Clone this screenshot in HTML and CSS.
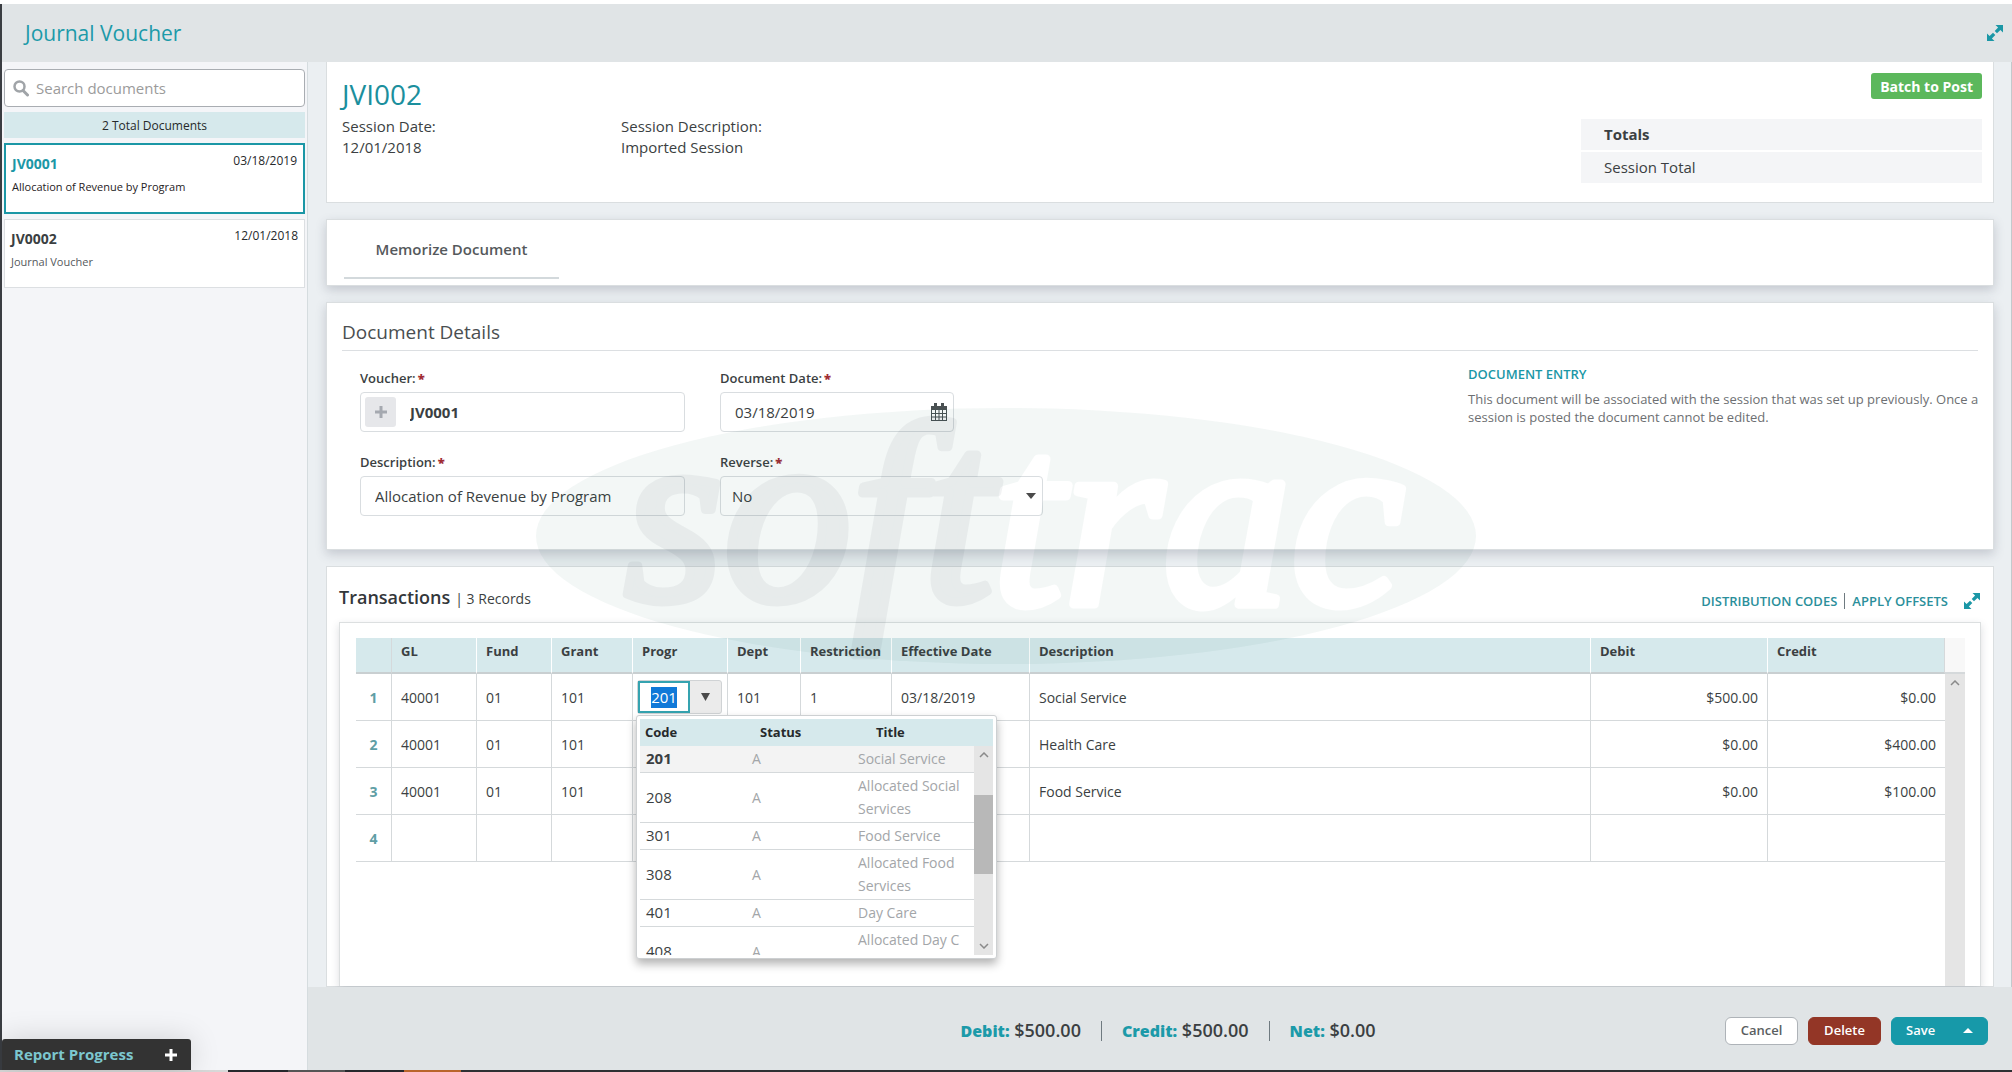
FILE: index.html
```html
<!DOCTYPE html>
<html lang="en">
<head>
<meta charset="utf-8">
<title>Journal Voucher</title>
<link rel="stylesheet" href="styles.css">
</head>
<body>
<svg class="symbols" aria-hidden="true">
  <symbol id="expand" viewBox="0 0 18 18">
    <path d="M9.5 1H17v7.500L14.400 5.900 11 9.300 8.700 7 12.100 3.600zM1 9.500v7.500h7.500L5.900 14.400 9.300 11 7 8.700 3.600 12.100z" fill="currentColor"/>
  </symbol>
  <symbol id="chevron" viewBox="0 0 10 6">
    <path d="M1 5l4-4 4 4" fill="none" stroke="currentColor" stroke-width="1.500"/>
  </symbol>
</svg>

<div class="app">
  <header class="topbar">
    <h1 class="topbar-title">Journal Voucher</h1>
    <button class="icon-button" type="button" aria-label="Expand"><svg width="18" height="18"><use href="#expand"/></svg></button>
  </header>

  <div class="body">
    <aside class="sidebar">
      <label class="search">
        <svg width="16" height="17" viewBox="0 0 16 17" aria-hidden="true"><circle cx="6.500" cy="6.500" r="5" fill="none" stroke="currentColor" stroke-width="2.500"/><path d="M10 10.500l4.500 4.500" stroke="currentColor" stroke-width="3" stroke-linecap="round"/></svg>
        <input type="search" placeholder="Search documents" aria-label="Search documents">
      </label>
      <p class="doc-count">2 Total Documents</p>
      <a class="doc doc-active" href="#jv0001">
        <span class="doc-name">JV0001</span><span class="doc-date">03/18/2019</span>
        <span class="doc-text">Allocation of Revenue by Program</span>
      </a>
      <a class="doc" href="#jv0002">
        <span class="doc-name">JV0002</span><span class="doc-date">12/01/2018</span>
        <span class="doc-text">Journal Voucher</span>
      </a>
    </aside>

    <div class="content">
      <main class="main">
        <section class="panel session">
          <h2 class="session-title">JVI002</h2>
          <div class="session-info">
            <p>Session Date:<br>12/01/2018</p>
            <p>Session Description:<br>Imported Session</p>
          </div>
          <div class="session-side">
            <button class="post-button" type="button">Batch to Post</button>
            <div class="totals">
              <p class="totals-head">Totals</p>
              <p>Session Total</p>
            </div>
          </div>
        </section>

        <section class="panel raised tabs">
          <button class="tab" type="button">Memorize Document</button>
        </section>

        <section class="panel raised details">
          <h3 class="details-title">Document Details</h3>
          <div class="details-body">
            <div class="fields">
              <div class="field">
                <label for="voucher">Voucher:<b class="required">*</b></label>
                <div class="box">
                  <button class="add" type="button" aria-label="Add voucher"><svg width="12" height="12" viewBox="0 0 12 12"><path d="M6 0v12M0 6h12" stroke="currentColor" stroke-width="3"/></svg></button>
                  <input id="voucher" class="voucher-input" value="JV0001">
                </div>
              </div>
              <div class="field field-date">
                <label for="date">Document Date:<b class="required">*</b></label>
                <div class="box">
                  <input id="date" value="03/18/2019">
                  <svg class="calendar" width="16" height="18" viewBox="0 0 16 18" aria-hidden="true">
                    <path d="M0 3h16v15H0z" fill="#4a5153"/><path d="M3 0h3v5H3zM10 0h3v5h-3z" fill="#4a5153"/>
                    <path d="M1 7h3v3H1zM5 7h2.500v3H5zM8.500 7H11v3H8.500zM12 7h3v3h-3zM1 11h3v2.500H1zM5 11h2.500v2.500H5zM8.500 11H11v2.500H8.500zM12 11h3v2.500h-3zM1 14.500h3V17H1zM5 14.500h2.500V17H5zM8.500 14.500H11V17H8.500zM12 14.500h3V17h-3z" fill="#fff"/>
                  </svg>
                </div>
              </div>
              <div class="field">
                <label for="description">Description:<b class="required">*</b></label>
                <div class="box"><input id="description" value="Allocation of Revenue by Program"></div>
              </div>
              <div class="field">
                <label for="reverse">Reverse:<b class="required">*</b></label>
                <div class="box">
                  <select id="reverse"><option>No</option><option>Yes</option></select>
                  <svg class="select-arrow" width="10" height="6" viewBox="0 0 10 6" aria-hidden="true"><path d="M0 0h10L5 6z" fill="#4a4a4a"/></svg>
                </div>
              </div>
            </div>
            <div class="hint">
              <h4>DOCUMENT ENTRY</h4>
              <p>This document will be associated with the session that was set up previously. Once a session is posted the document cannot be edited.</p>
            </div>
          </div>
        </section>

        <section class="panel transactions">
          <div class="transactions-head">
            <div class="transactions-title"><h3>Transactions</h3><span>| 3 Records</span></div>
            <nav class="links">
              <a href="#codes">DISTRIBUTION CODES</a><i class="bar"></i><a href="#offsets">APPLY OFFSETS</a>
            </nav>
            <button class="icon-button" type="button" aria-label="Expand transactions"><svg width="18" height="18"><use href="#expand"/></svg></button>
          </div>
          <div class="grid-card">
            <table class="grid">
              <colgroup>
                <col class="c-num"><col class="c-gl"><col class="c-fund"><col class="c-grant"><col class="c-progr"><col class="c-dept"><col class="c-restr"><col class="c-date"><col><col class="c-money"><col class="c-money">
              </colgroup>
              <thead>
                <tr><th></th><th>GL</th><th>Fund</th><th>Grant</th><th>Progr</th><th>Dept</th><th>Restriction</th><th>Effective Date</th><th>Description</th><th>Debit</th><th>Credit</th></tr>
              </thead>
              <tbody>
                <tr>
                  <td class="num">1</td><td>40001</td><td>01</td><td>101</td>
                  <td class="combo-cell">
                    <div class="combo">
                      <input id="program" value="201" aria-label="Program">
                      <button type="button" aria-label="Show programs"><svg width="9" height="8" viewBox="0 0 9 8"><path d="M0 0h9L4.500 8z" fill="#4a4a4a"/></svg></button>
                      <div class="popup">
                        <div class="popup-head"><span>Code</span><span>Status</span><span>Title</span></div>
                        <div class="popup-body">
                          <div class="options" role="listbox" aria-label="Programs">
                            <div class="option option-selected" role="option" aria-selected="true"><span>201</span><span>A</span><span>Social Service</span></div>
                            <div class="option" role="option"><span>208</span><span>A</span><span>Allocated Social Services</span></div>
                            <div class="option" role="option"><span>301</span><span>A</span><span>Food Service</span></div>
                            <div class="option" role="option"><span>308</span><span>A</span><span>Allocated Food Services</span></div>
                            <div class="option" role="option"><span>401</span><span>A</span><span>Day Care</span></div>
                            <div class="option" role="option"><span>408</span><span>A</span><span class="two-lines">Allocated Day C</span></div>
                          </div>
                          <div class="scrollbar popup-scroll">
                            <svg width="10" height="6"><use href="#chevron"/></svg>
                            <i class="thumb"></i>
                            <svg class="down" width="10" height="6"><use href="#chevron"/></svg>
                          </div>
                        </div>
                      </div>
                    </div>
                  </td>
                  <td>101</td><td>1</td><td>03/18/2019</td><td>Social Service</td><td class="money">$500.00</td><td class="money">$0.00</td>
                </tr>
                <tr><td class="num">2</td><td>40001</td><td>01</td><td>101</td><td></td><td></td><td></td><td></td><td>Health Care</td><td class="money">$0.00</td><td class="money">$400.00</td></tr>
                <tr><td class="num">3</td><td>40001</td><td>01</td><td>101</td><td></td><td></td><td></td><td></td><td>Food Service</td><td class="money">$0.00</td><td class="money">$100.00</td></tr>
                <tr><td class="num">4</td><td></td><td></td><td></td><td></td><td></td><td></td><td></td><td></td><td></td><td></td></tr>
              </tbody>
            </table>
            <div class="grid-side">
              <div class="grid-corner"></div>
              <div class="scrollbar"><svg width="10" height="6"><use href="#chevron"/></svg></div>
            </div>
          </div>
        </section>
      </main>

      <footer class="footer">
        <div class="sums">
          <span><b>Debit:</b> $500.00</span><i class="bar"></i>
          <span><b>Credit:</b> $500.00</span><i class="bar"></i>
          <span><b>Net:</b> $0.00</span>
        </div>
        <div class="actions">
          <button class="action" type="button">Cancel</button>
          <button class="action action-delete" type="button">Delete</button>
          <button class="action action-save" type="button">Save <svg width="10" height="5" viewBox="0 0 10 5"><path d="M0 5h10L5 0z" fill="#fff"/></svg></button>
        </div>
      </footer>
    </div>
  </div>
  <div class="taskbar"></div>

  <button class="report" type="button">Report Progress <svg width="14" height="14" viewBox="0 0 14 14"><path d="M7 1v12M1 7h12" stroke="#fff" stroke-width="3"/></svg></button>

  <svg class="watermark" width="940" height="256" viewBox="0 0 940 256" aria-hidden="true">
    <mask id="cutout">
      <rect width="940" height="256" fill="#fff"/>
      <text class="mark" x="456" y="196" fill="#000" stroke="#000">trac</text>
    </mask>
    <ellipse cx="470" cy="128" rx="470" ry="128" fill="#1f6b5a" fill-opacity=".055" mask="url(#cutout)"/>
    <text class="mark" x="88" y="192" fill="#273746" stroke="#273746" opacity=".055">soft</text>
  </svg>
</div>
<script src="script.js"></script>
</body>
</html>
```
FILE: script.js
```js
// The program cell opens in edit mode with its value selected.
const program = document.getElementById('program');
program.focus({ preventScroll: true });
program.select();
```
FILE: styles.css
```css
* { box-sizing: border-box; }
body, h1, h2, h3, h4, p { margin: 0; }
h1, h2, h3, h4 { font-weight: 400; }
body {
  font-family: "Open Sans", "Noto Sans", sans-serif;
  font-size: 15px;
  line-height: 21px;
  color: #3b3f42;
  background: #fff;
}
button, input, select { font: inherit; color: inherit; }
button { border: 0; padding: 0; background: none; }
svg { display: block; }
.symbols { position: absolute; width: 0; height: 0; }

.app {
  height: 100vh;
  display: flex;
  flex-direction: column;
  padding-top: 4px;
}
.topbar {
  flex: none;
  display: flex;
  align-items: center;
  justify-content: space-between;
  height: 58px;
  padding: 0 8px 0 23px;
  border-left: 2px solid #3a3d42;
  background: #e0e4e6;
}
.topbar-title { font-size: 21px; line-height: 30px; color: #1c9aa9; }
.icon-button { color: #1b97a6; }
.body { flex: 1; min-height: 0; display: flex; border-left: 2px solid #3a3d42; }

/* Sidebar */
.sidebar {
  flex: none;
  width: 306px;
  display: flex;
  flex-direction: column;
  gap: 5px;
  padding: 7px 2px;
  border-right: 1px solid #d5dcdf;
  background: #f4f5f8;
}
.search {
  display: flex;
  align-items: center;
  gap: 7px;
  height: 38px;
  padding: 0 8px;
  border: 1px solid #a9adb2;
  border-radius: 4px;
  background: #fff;
  color: #a0a4a8;
}
.search input { flex: 1; min-width: 0; padding: 0; border: 0; outline: 0; background: none; }
.search input::placeholder { color: #9b9b9b; }
.doc-count { padding: 3px 0 2px; text-align: center; font-size: 12px; color: #26292b; background: #d6e9ec; }
.doc {
  display: grid;
  grid-template-columns: 1fr auto;
  row-gap: 5px;
  padding: 9px 6px 17px;
  border: 1px solid #dcdfe2;
  background: #fff;
  color: #55595c;
  text-decoration: none;
}
.doc-name { font-size: 14px; line-height: 20px; font-weight: 700; color: #3b3f42; }
.doc-date { font-size: 12px; line-height: 14px; color: #26292b; }
.doc-text { grid-column: 1 / -1; font-size: 11px; line-height: 16px; }
.doc-active { border: 2px solid #1b97a6; color: #1f2224; }
.doc-active .doc-name { color: #1b97a6; }

/* Main column */
.content { flex: 1; min-width: 0; display: flex; flex-direction: column; }
.main {
  flex: 1;
  min-height: 0;
  overflow: hidden;
  display: flex;
  flex-direction: column;
  gap: 16px;
  padding: 0 17px 0 18px;
  border-right: 1px solid #c3c9cc;
  background: #ebeff2;
}
.panel { flex: none; border: 1px solid #dadee0; background: #fff; }
.raised { box-shadow: 0 4px 10px rgba(60, 65, 85, .22); }

.session {
  display: grid;
  grid-template-columns: 1fr 401px;
  grid-template-rows: auto 1fr;
  padding: 11px 11px 19px 15px;
  border-top: 0;
}
.session-title { padding: 2px 0 3px; font-size: 28px; line-height: 38px; color: #1b8f9d; }
.session-info { display: flex; }
.session-info p { flex: 0 1 279px; }
.session-side {
  grid-column: 2;
  grid-row: 1 / 3;
  display: flex;
  flex-direction: column;
  align-items: flex-end;
  gap: 20px;
}
.post-button { height: 26px; padding: 0 9px; border-radius: 3px; background: #5cb85c; color: #fff; font-size: 14px; font-weight: 700; }
.totals { width: 100%; display: grid; gap: 2px; }
.totals p { padding: 5px 23px; background: #f4f5f7; }
.totals-head { font-weight: 700; }

.tabs { padding: 16px 17px 6px; }
.tab { width: 215px; padding: 2px 0 16px; border-bottom: 2px solid #d3d9dc; font-weight: 600; line-height: 23px; color: #55595c; }

.details { padding: 13px 15px 33px; }
.details-title { padding-bottom: 2px; border-bottom: 1px solid #dcdfe2; font-size: 19px; line-height: 32px; color: #4a4e50; }
.details-body { display: flex; justify-content: space-between; margin-right: -6px; padding: 14px 0 0 18px; }
.fields { display: grid; grid-template-columns: 325px 323px; gap: 20px 35px; padding-top: 3px; }
.field { display: grid; grid-template-columns: minmax(0, 1fr); gap: 3px; }
.field-date { width: 234px; }
.field label { font-size: 13px; font-weight: 600; }
.required { margin-left: 2px; color: #a02c33; }
.box { display: flex; align-items: center; height: 40px; padding: 0 6px 0 4px; border: 1px solid #d9dde0; border-radius: 4px; background: #fff; }
.box input, .box select { flex: 1; min-width: 0; height: 100%; padding: 0 10px; border: 0; outline: 0; background: none; appearance: none; }
.box select { padding: 0 7px; }
.box .voucher-input { padding-left: 14px; font-weight: 700; }
.add { flex: none; width: 31px; height: 30px; display: grid; place-items: center; border-radius: 3px; background: #e6e7ea; color: #a5a9b0; }
.calendar { flex: none; }
.select-arrow { flex: none; }
.hint { width: 516px; font-size: 13px; line-height: 18px; color: #6d6f72; }
.hint h4 { padding-bottom: 7px; font-weight: 600; color: #1b97a6; }

/* Transactions */
.transactions { flex: 1; min-height: 0; display: flex; flex-direction: column; padding: 14px 12px 0; }
.transactions-head { display: flex; align-items: center; height: 41px; padding-bottom: 1px; }
.transactions-title { display: flex; align-items: baseline; gap: 5px; padding-bottom: 6px; font-size: 14px; }
.transactions h3 { font-size: 18px; font-weight: 600; color: #33373a; }
.links { display: flex; align-items: center; gap: 7px; margin: 0 15px 0 auto; font-size: 13px; font-weight: 600; }
.links a { color: #2b8f9b; text-decoration: none; }
.bar { width: 1px; height: 16px; background: #6f7a80; }
.grid-card {
  flex: 1;
  display: flex;
  align-items: flex-start;
  padding: 15px 15px 0 16px;
  border: 1px solid #dcdfe0;
  border-bottom: 0;
  box-shadow: 0 3px 8px rgba(60, 65, 85, .18);
}
.grid { flex: 1; table-layout: fixed; border-collapse: separate; border-spacing: 0; width: 100%; font-size: 14px; }
.c-num { width: 36px; }
.c-gl { width: 85px; }
.c-fund { width: 75px; }
.c-grant { width: 81px; }
.c-progr { width: 95px; }
.c-dept { width: 73px; }
.c-restr { width: 91px; }
.c-date { width: 138px; }
.c-money { width: 177px; }
.grid th {
  height: 36px;
  padding: 0 0 7px 9px;
  border-right: 1px solid #fff;
  border-bottom: 2px solid #c9cfd1;
  background: #d6e9ec;
  font-size: 13px;
  font-weight: 700;
  text-align: left;
  white-space: nowrap;
}
.grid td { height: 47px; padding: 0 9px; border-right: 1px solid #d5d9db; border-bottom: 1px solid #d5d9db; }
.grid th:first-child, .grid th:last-child { border-right-color: #d5d9db; }
.grid td:last-child { border-right: 0; }
.grid .num { padding: 0; text-align: center; font-weight: 700; color: #5f9ea5; }
.grid .money { text-align: right; }
.grid-side { flex: none; align-self: stretch; width: 20px; display: flex; flex-direction: column; }
.grid-corner { height: 36px; border-bottom: 2px solid #d5d9db; background: #f8f8f8; }
.scrollbar { flex: 1; display: flex; flex-direction: column; align-items: center; padding: 6px 0; background: #e5e5e5; color: #8a8a8a; }

/* Program picker */
.grid .combo-cell { padding: 0 4px; }
.combo { position: relative; display: flex; width: 85px; height: 34px; border: 1px solid #d0d3d5; border-radius: 3px; background: #ebebeb; }
.combo input { width: 52px; padding: 0; border: 2px solid #35a3b0; outline: 0; background: #fff; text-align: center; font-size: 15px; }
.combo input::selection { background: #1079d8; color: #fff; }
.combo button { flex: 1; display: grid; place-items: center; }
.popup {
  position: absolute;
  z-index: 2;
  top: 34px;
  left: -2px;
  width: 361px;
  padding: 3px;
  border: 1px solid #cdd0d2;
  border-radius: 3px;
  background: #fff;
  box-shadow: 0 5px 10px rgba(0, 0, 0, .3);
}
.popup-head { display: grid; grid-template-columns: 115px 116px 1fr; padding: 3px 5px; background: #d6e9ec; font-size: 13px; font-weight: 700; color: #26292b; }
.popup-body { display: flex; height: 209px; }
.options { flex: 1; overflow: hidden; }
.option {
  display: grid;
  grid-template-columns: 106px 106px 1fr;
  align-items: center;
  padding: 1px 0 2px 6px;
  border-bottom: 1px solid #d5d9db;
  line-height: 23px;
  color: #a3a6a9;
}
.option span:first-child { font-size: 15px; color: #3b3f42; }
.option-selected { background: #f3f3f3; }
.option-selected span:first-child { font-weight: 700; }
.two-lines { min-height: 46px; }
.popup-scroll { flex: none; width: 19px; }
.thumb { width: 19px; height: 79px; margin: 37px 0 auto; background: #b8b8b8; }
.down { transform: rotate(180deg); }

/* Footer */
.footer { flex: none; display: grid; grid-template-columns: 1fr auto 1fr; align-items: center; height: 83px; padding: 4px 24px 0; background: #e0e4e6; }
.sums { grid-column: 2; display: flex; align-items: center; gap: 20px; padding-left: 16px; font-size: 18px; font-weight: 600; }
.sums b { font-size: 16px; color: #1c9aa9; }
.sums .bar { height: 20px; }
.actions { justify-self: end; display: flex; gap: 10px; }
.action { height: 28px; width: 73px; border: 1px solid #aeb3b8; border-radius: 6px; background: #fff; font-size: 13px; font-weight: 600; color: #5a5e61; }
.action-delete { border-color: #933626; background: #933626; color: #fff; }
.action-save { display: flex; align-items: center; justify-content: space-between; width: 97px; padding: 0 14px; border-color: #1799a9; background: #1799a9; color: #fff; }

.taskbar {
  flex: none;
  height: 2px;
  background: linear-gradient(90deg, #d8d8d8 228px, #26282c 228px, #26282c 288px, #555 288px, #555 345px, #26282c 345px, #26282c 404px, #b9652b 404px, #b9652b 461px, #2e3033 461px);
}
.report {
  position: absolute;
  left: 2px;
  bottom: 2px;
  display: flex;
  align-items: center;
  gap: 31px;
  height: 31px;
  padding: 0 13px 0 12px;
  border-radius: 3px 3px 0 0;
  background: #333;
  color: #7cc7cf;
  font-weight: 700;
  box-shadow: 0 0 30px rgba(0, 0, 0, .15);
}

/* Brand watermark, centred over the whole page */
.watermark { position: absolute; inset: 0; margin: auto; pointer-events: none; }
.mark { font: italic 400 256px "Liberation Serif", serif; stroke-width: 9px; stroke-linejoin: round; }
```
